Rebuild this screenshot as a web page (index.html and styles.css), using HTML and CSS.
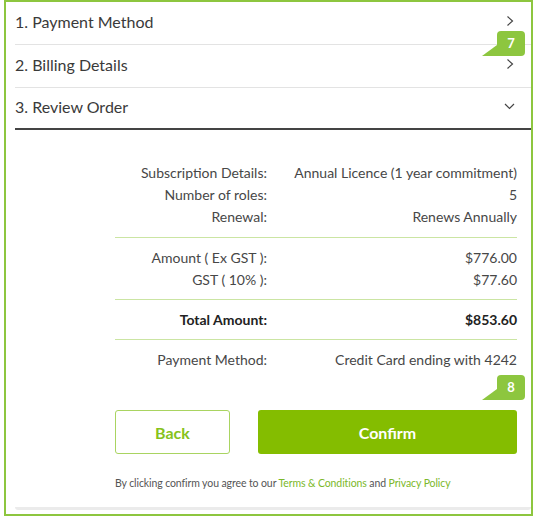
FILE: index.html
```html
<!DOCTYPE html>
<html lang="en">
<head>
<meta charset="utf-8">
<title>Checkout</title>
<link rel="stylesheet" href="styles.css">
</head>
<body>
<div class="frame">
  <div class="acc-row">
    <span class="acc-title">1. Payment Method</span>
    <svg class="chev" width="8" height="12" viewBox="0 0 8 12"><polyline points="1.5,1.5 6.5,6 1.5,10.5" fill="none" stroke="#444" stroke-width="1.2"/></svg>
  </div>
  <div class="acc-row">
    <span class="acc-title">2. Billing Details</span>
    <svg class="chev" width="8" height="12" viewBox="0 0 8 12"><polyline points="1.5,1.5 6.5,6 1.5,10.5" fill="none" stroke="#444" stroke-width="1.2"/></svg>
  </div>
  <div class="acc-row acc-open">
    <span class="acc-title">3. Review Order</span>
    <svg class="chev-down" width="11" height="7" viewBox="0 0 11 7"><polyline points="1,1 5.5,5.5 10,1" fill="none" stroke="#444" stroke-width="1.2"/></svg>
  </div>

  <div class="panel">
    <div class="summary">
      <div class="sum-group g1">
        <span class="lbl">Subscription Details:</span><span class="val">Annual Licence (1 year commitment)</span>
        <span class="lbl">Number of roles:</span><span class="val">5</span>
        <span class="lbl">Renewal:</span><span class="val">Renews Annually</span>
      </div>
      <div class="sum-group g2">
        <span class="lbl">Amount ( Ex GST ):</span><span class="val">$776.00</span>
        <span class="lbl">GST ( 10% ):</span><span class="val">$77.60</span>
      </div>
      <div class="sum-group g3 total">
        <span class="lbl">Total Amount:</span><span class="val">$853.60</span>
      </div>
      <div class="sum-group g4">
        <span class="lbl">Payment Method:</span><span class="val">Credit Card ending with 4242</span>
      </div>

      <div class="actions">
        <button class="btn btn-back">Back</button>
        <button class="btn btn-confirm">Confirm</button>
      </div>
      <p class="disclaimer">By clicking confirm you agree to our <a href="#">Terms &amp; Conditions</a> and <a href="#">Privacy Policy</a></p>
    </div>
    <div class="card-shadow"></div>
  </div>

  <div class="badge badge-7">7</div>
  <div class="badge badge-8">8</div>
</div>
</body>
</html>
```

FILE: styles.css
```css
* { box-sizing: border-box; }

body {
  margin: 0;
  background: #fff;
  font-family: "Lato", "Noto Sans", sans-serif;
  color: #3a3a3a;
}

.frame {
  position: relative;
  margin-left: 4px;
  width: 529px;
  border: 2px solid #8dc63f;
  padding: 0 0 4px 9px;
}

.acc-row {
  display: flex;
  align-items: center;
  justify-content: space-between;
  height: 43px;
  padding: 0 16px 4px 0;
  border-bottom: 1px solid #e3e3e3;
}

.acc-open {
  height: 42px;
  border-bottom: 2px solid #444;
}

.acc-title {
  font-size: 16px;
  color: #3a3a3a;
}

.chev { margin-right: 1px; }

.panel {
  padding-top: 32px;
}

.summary {
  margin-left: 100px;
  width: 402px;
}

.sum-group {
  display: grid;
  grid-template-columns: 152px 1fr;
  font-size: 14px;
  line-height: 22px;
  color: #474747;
  border-bottom: 1px solid #cbe5a3;
  padding: 9px 0;
}

.g1 { padding-top: 0; }
.g2 { padding-bottom: 8px; }
.g3 { padding-bottom: 8px; }
.g4 { border-bottom: none; padding-bottom: 0; }

.lbl { text-align: right; }
.val { text-align: right; }

.total { font-weight: 700; color: #222; }

.actions {
  display: flex;
  gap: 28px;
  margin-top: 39px;
}

.btn {
  height: 44px;
  border-radius: 3px;
  font-family: inherit;
  font-size: 16px;
  font-weight: 700;
  cursor: pointer;
}

.btn-back {
  width: 115px;
  background: #fff;
  border: 1px solid #a9d461;
  color: #86c21c;
}

.btn-confirm {
  flex: 1;
  background: #84bd00;
  border: none;
  color: #fff;
}

.disclaimer {
  margin: 21px 0 0;
  font-size: 10.5px;
  letter-spacing: -0.1px;
  line-height: 16px;
  color: #555;
}

.disclaimer a {
  color: #7cb82a;
  text-decoration: none;
}

.card-shadow {
  margin-top: 16px;
  height: 3px;
  background: #ebebeb;
  border-radius: 0 0 3px 3px;
}

.badge {
  position: absolute;
  left: 491px;
  width: 28px;
  height: 25px;
  border-radius: 4px;
  background: #8dc63f;
  color: #fff;
  font-size: 13px;
  font-weight: 700;
  line-height: 25px;
  text-align: center;
}

.badge::before {
  content: "";
  position: absolute;
  left: -15px;
  bottom: 0;
  width: 20px;
  height: 11px;
  background: #8dc63f;
  clip-path: polygon(0 100%, 75% 0, 100% 0, 100% 100%);
}

.badge-7 { top: 29px; }
.badge-8 { top: 373px; }
```
